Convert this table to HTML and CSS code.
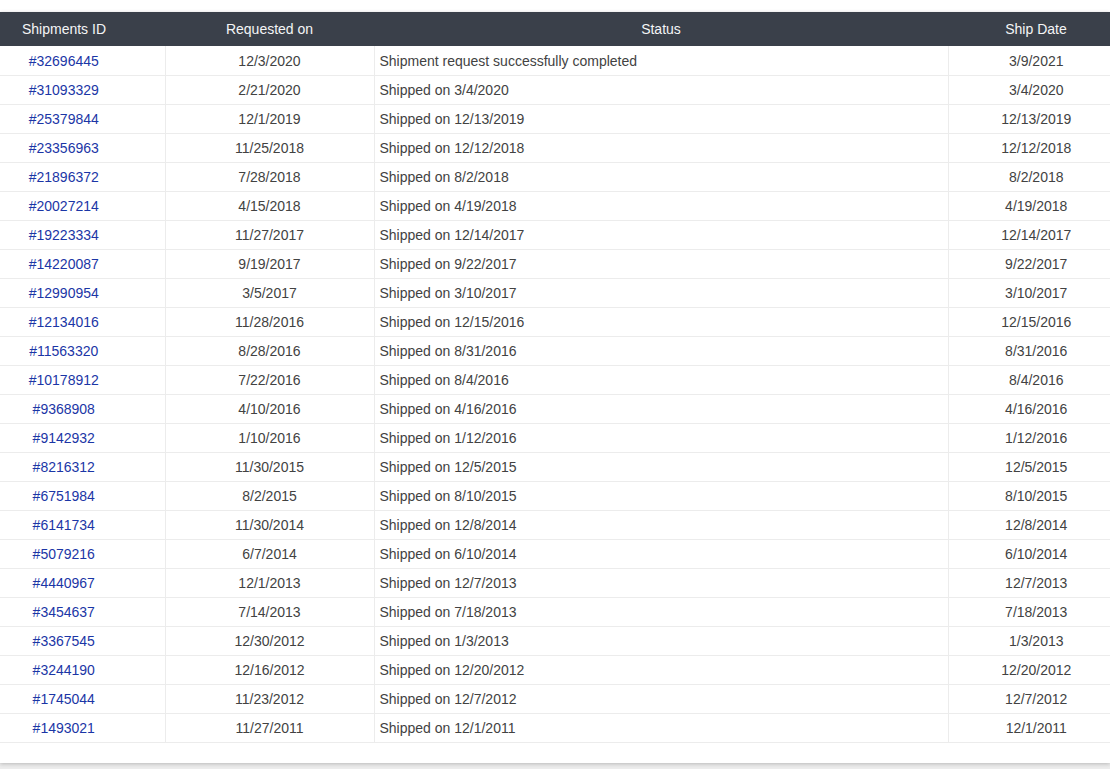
FILE: index.html
```html
<!DOCTYPE html>
<html>
<head>
<meta charset="utf-8">
<link rel="stylesheet" href="styles.css">
</head>
<body>
<div class="page">
  <div class="card">
    <table class="grid">
      <colgroup>
        <col class="c-id"><col class="c-req"><col class="c-status"><col class="c-ship">
      </colgroup>
      <thead>
        <tr>
          <th class="id">Shipments ID</th>
          <th>Requested on</th>
          <th>Status</th>
          <th class="ship">Ship Date</th>
        </tr>
      </thead>
      <tbody>
        <tr><td class="id"><a href="#">#32696445</a></td><td>12/3/2020</td><td class="status">Shipment request successfully completed</td><td class="ship">3/9/2021</td></tr>
        <tr><td class="id"><a href="#">#31093329</a></td><td>2/21/2020</td><td class="status">Shipped on 3/4/2020</td><td class="ship">3/4/2020</td></tr>
        <tr><td class="id"><a href="#">#25379844</a></td><td>12/1/2019</td><td class="status">Shipped on 12/13/2019</td><td class="ship">12/13/2019</td></tr>
        <tr><td class="id"><a href="#">#23356963</a></td><td>11/25/2018</td><td class="status">Shipped on 12/12/2018</td><td class="ship">12/12/2018</td></tr>
        <tr><td class="id"><a href="#">#21896372</a></td><td>7/28/2018</td><td class="status">Shipped on 8/2/2018</td><td class="ship">8/2/2018</td></tr>
        <tr><td class="id"><a href="#">#20027214</a></td><td>4/15/2018</td><td class="status">Shipped on 4/19/2018</td><td class="ship">4/19/2018</td></tr>
        <tr><td class="id"><a href="#">#19223334</a></td><td>11/27/2017</td><td class="status">Shipped on 12/14/2017</td><td class="ship">12/14/2017</td></tr>
        <tr><td class="id"><a href="#">#14220087</a></td><td>9/19/2017</td><td class="status">Shipped on 9/22/2017</td><td class="ship">9/22/2017</td></tr>
        <tr><td class="id"><a href="#">#12990954</a></td><td>3/5/2017</td><td class="status">Shipped on 3/10/2017</td><td class="ship">3/10/2017</td></tr>
        <tr><td class="id"><a href="#">#12134016</a></td><td>11/28/2016</td><td class="status">Shipped on 12/15/2016</td><td class="ship">12/15/2016</td></tr>
        <tr><td class="id"><a href="#">#11563320</a></td><td>8/28/2016</td><td class="status">Shipped on 8/31/2016</td><td class="ship">8/31/2016</td></tr>
        <tr><td class="id"><a href="#">#10178912</a></td><td>7/22/2016</td><td class="status">Shipped on 8/4/2016</td><td class="ship">8/4/2016</td></tr>
        <tr><td class="id"><a href="#">#9368908</a></td><td>4/10/2016</td><td class="status">Shipped on 4/16/2016</td><td class="ship">4/16/2016</td></tr>
        <tr><td class="id"><a href="#">#9142932</a></td><td>1/10/2016</td><td class="status">Shipped on 1/12/2016</td><td class="ship">1/12/2016</td></tr>
        <tr><td class="id"><a href="#">#8216312</a></td><td>11/30/2015</td><td class="status">Shipped on 12/5/2015</td><td class="ship">12/5/2015</td></tr>
        <tr><td class="id"><a href="#">#6751984</a></td><td>8/2/2015</td><td class="status">Shipped on 8/10/2015</td><td class="ship">8/10/2015</td></tr>
        <tr><td class="id"><a href="#">#6141734</a></td><td>11/30/2014</td><td class="status">Shipped on 12/8/2014</td><td class="ship">12/8/2014</td></tr>
        <tr><td class="id"><a href="#">#5079216</a></td><td>6/7/2014</td><td class="status">Shipped on 6/10/2014</td><td class="ship">6/10/2014</td></tr>
        <tr><td class="id"><a href="#">#4440967</a></td><td>12/1/2013</td><td class="status">Shipped on 12/7/2013</td><td class="ship">12/7/2013</td></tr>
        <tr><td class="id"><a href="#">#3454637</a></td><td>7/14/2013</td><td class="status">Shipped on 7/18/2013</td><td class="ship">7/18/2013</td></tr>
        <tr><td class="id"><a href="#">#3367545</a></td><td>12/30/2012</td><td class="status">Shipped on 1/3/2013</td><td class="ship">1/3/2013</td></tr>
        <tr><td class="id"><a href="#">#3244190</a></td><td>12/16/2012</td><td class="status">Shipped on 12/20/2012</td><td class="ship">12/20/2012</td></tr>
        <tr><td class="id"><a href="#">#1745044</a></td><td>11/23/2012</td><td class="status">Shipped on 12/7/2012</td><td class="ship">12/7/2012</td></tr>
        <tr><td class="id"><a href="#">#1493021</a></td><td>11/27/2011</td><td class="status">Shipped on 12/1/2011</td><td class="ship">12/1/2011</td></tr>
      </tbody>
    </table>
    <div class="card-foot"></div>
  </div>
  <div class="below"></div>
</div>
</body>
</html>
```
FILE: styles.css
```css
html, body {
  margin: 0;
  padding: 0;
  background: #ffffff;
}
body {
  font-family: "Liberation Sans", Arial, sans-serif;
  font-size: 14px;
  color: #424242;
  overflow: hidden;
}
.page {
  padding-top: 12px;
  display: flex;
  flex-direction: column;
  min-height: 769px;
  box-sizing: border-box;
}
.card {
  background: #ffffff;
  position: relative;
  z-index: 1;
  box-shadow: 0 1px 4px rgba(0, 0, 0, 0.22);
}
.grid {
  width: 1110px;
  border-collapse: collapse;
  table-layout: fixed;
}
.c-id { width: 165px; }
.c-req { width: 209px; }
.c-status { width: 574px; }
.c-ship { width: 162px; }
.grid th {
  background: #3a404a;
  color: #f4f5f6;
  font-weight: normal;
  height: 34px;
  padding: 0;
  text-align: center;
  box-sizing: border-box;
}
.grid td {
  height: 29px;
  padding: 0;
  box-sizing: border-box;
  border-bottom: 1px solid #ececec;
  border-right: 1px solid #ececec;
  text-align: center;
  vertical-align: middle;
  line-height: 16px;
  padding-top: 1px;
}
.grid td:last-child { border-right: none; }
.grid .id { padding-right: 37px; }
.grid .ship { padding-left: 14px; }
.grid td.status {
  text-align: left;
  padding-left: 5px;
}
.grid a {
  color: #1b36a6;
  text-decoration: none;
}
.card-foot {
  height: 20px;
}
.below {
  flex: 1;
  background: #ececec;
}
```
